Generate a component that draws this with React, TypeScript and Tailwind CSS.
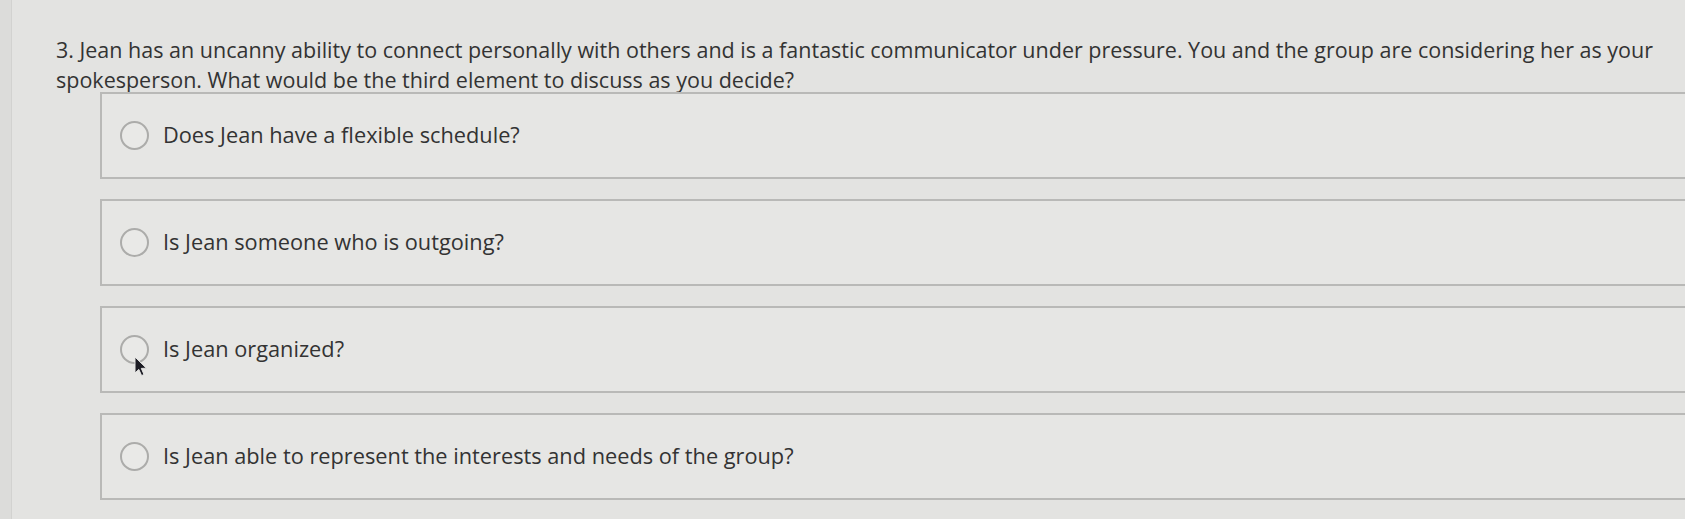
const options = [
  'Does Jean have a flexible schedule?',
  'Is Jean someone who is outgoing?',
  'Is Jean organized?',
  'Is Jean able to represent the interests and needs of the group?',
];

function Cursor() {
  return (
    <svg className="absolute left-[14px] top-[21px]" width="14" height="21" viewBox="0 0 14 21">
      <path d="M1 1 L1 17 L4.8 13.4 L7.6 19.6 L10 18.5 L7.3 12.4 L12.4 12.2 Z" fill="#1c1c24" stroke="#e6e6e4" strokeWidth="1" />
    </svg>
  );
}

export default function App() {
  return (
    <div className="w-[1685px] h-[519px] overflow-hidden bg-[#e3e3e1] flex font-['Open_Sans','Noto_Sans',sans-serif]">
      {/* left screen edge */}
      <div className="w-[12px] shrink-0 bg-[#dcdcda] border-r border-[#d2d2d0]" />

      <div className="flex-1 pl-[44px] pt-[35px]">
        <p className="text-[21.5px] leading-[30px] text-[#333333] pr-[10px]">
          3. Jean has an uncanny ability to connect personally with others and is a fantastic communicator under pressure. You and the group are considering her as your spokesperson. What would be the third element to discuss as you decide?
        </p>

        <div className="mt-[-3px] ml-[44px] flex flex-col gap-[20px]">
          {options.map((text, i) => (
            <div
              key={text}
              className="h-[87px] flex items-center border-2 border-r-0 border-[#b9b9b7] bg-[#e6e6e4] pl-[18px]"
            >
              <span className="relative w-[29px] h-[29px] shrink-0">
                <span className="block w-full h-full rounded-full border-2 border-[#acacaa] bg-[#e9e9e7]" />
                {i === 2 && <Cursor />}
              </span>
              <span className="ml-[14px] text-[21.75px] text-[#333333]">{text}</span>
            </div>
          ))}
        </div>
      </div>
    </div>
  );
}
